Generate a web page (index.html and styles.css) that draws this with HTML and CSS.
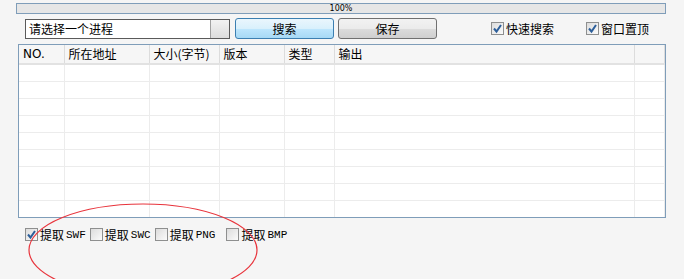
FILE: index.html
```html
<!DOCTYPE html>
<html lang="zh-CN">
  <head>
    <meta charset="UTF-8" />
    <title>提取工具</title>
    <link rel="stylesheet" href="styles.css">
  </head>
  <body>
    <div class="app">
      <!-- 进度条 -->
      <div class="progress"><span>100%</span></div>

      <!-- 工具栏 -->
      <div class="toolbar">
        <div class="combo">
          <span class="combo-text">请选择一个进程</span>
          <span class="combo-btn"></span>
        </div>
        <button class="btn btn-primary">搜索</button>
        <button class="btn">保存</button>
        <label class="check check-fast"><span class="box checked"><svg width="11" height="11" viewBox="0 0 11 11"><path d="M2 5.5 L4.5 8.5 L9 2" fill="none" stroke="#2d5f9a" stroke-width="2"/></svg></span>快速搜索</label>
        <label class="check"><span class="box checked"><svg width="11" height="11" viewBox="0 0 11 11"><path d="M2 5.5 L4.5 8.5 L9 2" fill="none" stroke="#2d5f9a" stroke-width="2"/></svg></span>窗口置顶</label>
      </div>

      <!-- 列表 -->
      <div class="list">
        <table>
          <colgroup>
            <col class="c-no" />
            <col class="c-addr" />
            <col class="c-size" />
            <col class="c-ver" />
            <col class="c-type" />
            <col class="c-out" />
            <col />
          </colgroup>
          <thead>
            <tr>
              <th class="no">NO.</th>
              <th>所在地址</th>
              <th>大小(字节)</th>
              <th>版本</th>
              <th>类型</th>
              <th>输出</th>
              <th></th>
            </tr>
          </thead>
          <tbody>
            <tr><td></td><td></td><td></td><td></td><td></td><td></td><td></td></tr>
            <tr><td></td><td></td><td></td><td></td><td></td><td></td><td></td></tr>
            <tr><td></td><td></td><td></td><td></td><td></td><td></td><td></td></tr>
            <tr><td></td><td></td><td></td><td></td><td></td><td></td><td></td></tr>
            <tr><td></td><td></td><td></td><td></td><td></td><td></td><td></td></tr>
            <tr><td></td><td></td><td></td><td></td><td></td><td></td><td></td></tr>
            <tr><td></td><td></td><td></td><td></td><td></td><td></td><td></td></tr>
            <tr><td></td><td></td><td></td><td></td><td></td><td></td><td></td></tr>
            <tr><td></td><td></td><td></td><td></td><td></td><td></td><td></td></tr>
          </tbody>
        </table>
      </div>

      <!-- 提取选项 -->
      <div class="options">
        <label class="check"><span class="box checked"><svg width="11" height="11" viewBox="0 0 11 11"><path d="M2 5.5 L4.5 8.5 L9 2" fill="none" stroke="#2d5f9a" stroke-width="2"/></svg></span>提取<span class="mono">SWF</span></label>
        <label class="check"><span class="box"></span>提取<span class="mono">SWC</span></label>
        <label class="check check-wide"><span class="box"></span>提取<span class="mono">PNG</span></label>
        <label class="check"><span class="box"></span>提取<span class="mono">BMP</span></label>
      </div>

      <!-- 红圈标注 -->
      <svg class="mark" width="232" height="96" viewBox="0 0 232 96">
        <ellipse cx="115" cy="47" rx="114" ry="46" fill="none" stroke="#e8343c" stroke-width="1.2"/>
      </svg>
    </div>
  </body>
</html>
```

FILE: styles.css
```css
/* 页面 */
body {
  margin: 0;
  background-color: #f5f5f5;
  font-family: "Noto Sans CJK SC", "DejaVu Sans", sans-serif;
  font-size: 12px;
  color: #000;
}

.app {
  position: relative;
  width: 684px;
  height: 279px;
  overflow: hidden;
  padding-top: 3px;
  box-sizing: border-box;
}

/* 进度条 */
.progress {
  margin-left: 16px;
  width: 650px;
  height: 11px;
  box-sizing: border-box;
  border: 1px solid #7f9db9;
  background-color: #e6e6e6;
  text-align: center;
  font-family: "DejaVu Sans", sans-serif;
  font-size: 8px;
  line-height: 9px;
}

/* 工具栏 */
.toolbar {
  display: flex;
  align-items: center;
  height: 22px;
  margin-top: 3px;
  padding-left: 25px;
}

.combo {
  display: flex;
  width: 205px;
  height: 20px;
  box-sizing: border-box;
  border: 1px solid #5a5a5a;
  background-color: #fff;
  margin-top: 2px;
}

.combo-text {
  flex: 1;
  padding-left: 3px;
  line-height: 18px;
}

.combo-btn {
  width: 18px;
  border-left: 1px solid #a0a0a0;
  background: linear-gradient(#f2f2f2, #dcdcdc);
}

.btn {
  height: 21px;
  width: 99px;
  margin-left: 4px;
  padding: 0;
  border: 1px solid #707070;
  border-radius: 3px;
  background: linear-gradient(#f2f2f2 0%, #ebebeb 50%, #dcdcdc 51%, #cfcfcf 100%);
  font-family: "Noto Sans CJK SC", sans-serif;
  font-size: 12px;
  color: #000;
}

.btn-primary {
  margin-left: 5px;
  border-color: #3c7fb1;
  background: linear-gradient(#eaf6fd 0%, #d9f0fc 50%, #bee6fd 51%, #a7d9f5 100%);
}

.check {
  display: flex;
  align-items: center;
  gap: 2px;
  white-space: nowrap;
}

.check-fast {
  margin-left: 54px;
  margin-right: 32px;
}

.box {
  display: inline-flex;
  align-items: center;
  justify-content: center;
  width: 13px;
  height: 13px;
  box-sizing: border-box;
  border: 1px solid #8e8f8f;
  background: linear-gradient(135deg, #dcdcdc, #fbfbfb);
}

/* 列表 */
.list {
  margin: 5px 0 0 18px;
  width: 648px;
  height: 174px;
  box-sizing: border-box;
  border: 1px solid #7f9db9;
  background-color: #fff;
  overflow: hidden;
}

table {
  border-collapse: collapse;
  table-layout: fixed;
  width: 646px;
}

.c-no { width: 45px; }
.c-addr { width: 85px; }
.c-size { width: 70px; }
.c-ver { width: 65px; }
.c-type { width: 50px; }
.c-out { width: 300px; }

th {
  height: 18px;
  padding: 0 0 0 4px;
  background-color: #f6f6f6;
  border-right: 1px solid #dcdcdc;
  border-bottom: 2px solid #e2e2e2;
  font-weight: normal;
  text-align: left;
  line-height: 16px;
  overflow: hidden;
  white-space: nowrap;
}

th.no {
  font-family: "DejaVu Sans", sans-serif;
  font-size: 12px;
}

td {
  height: 16px;
  padding: 0;
  border-right: 1px solid #ececec;
  border-bottom: 1px solid #ececec;
}

/* 提取选项 */
.options {
  display: flex;
  align-items: center;
  gap: 4px;
  margin: 8px 0 0 25px;
}

.check-wide {
  margin-right: 7px;
}

.mono {
  font-family: "Liberation Mono", monospace;
  font-size: 11px;
  font-weight: normal;
}

/* 标注 */
.mark {
  position: absolute;
  left: 28px;
  top: 203px;
}
```
